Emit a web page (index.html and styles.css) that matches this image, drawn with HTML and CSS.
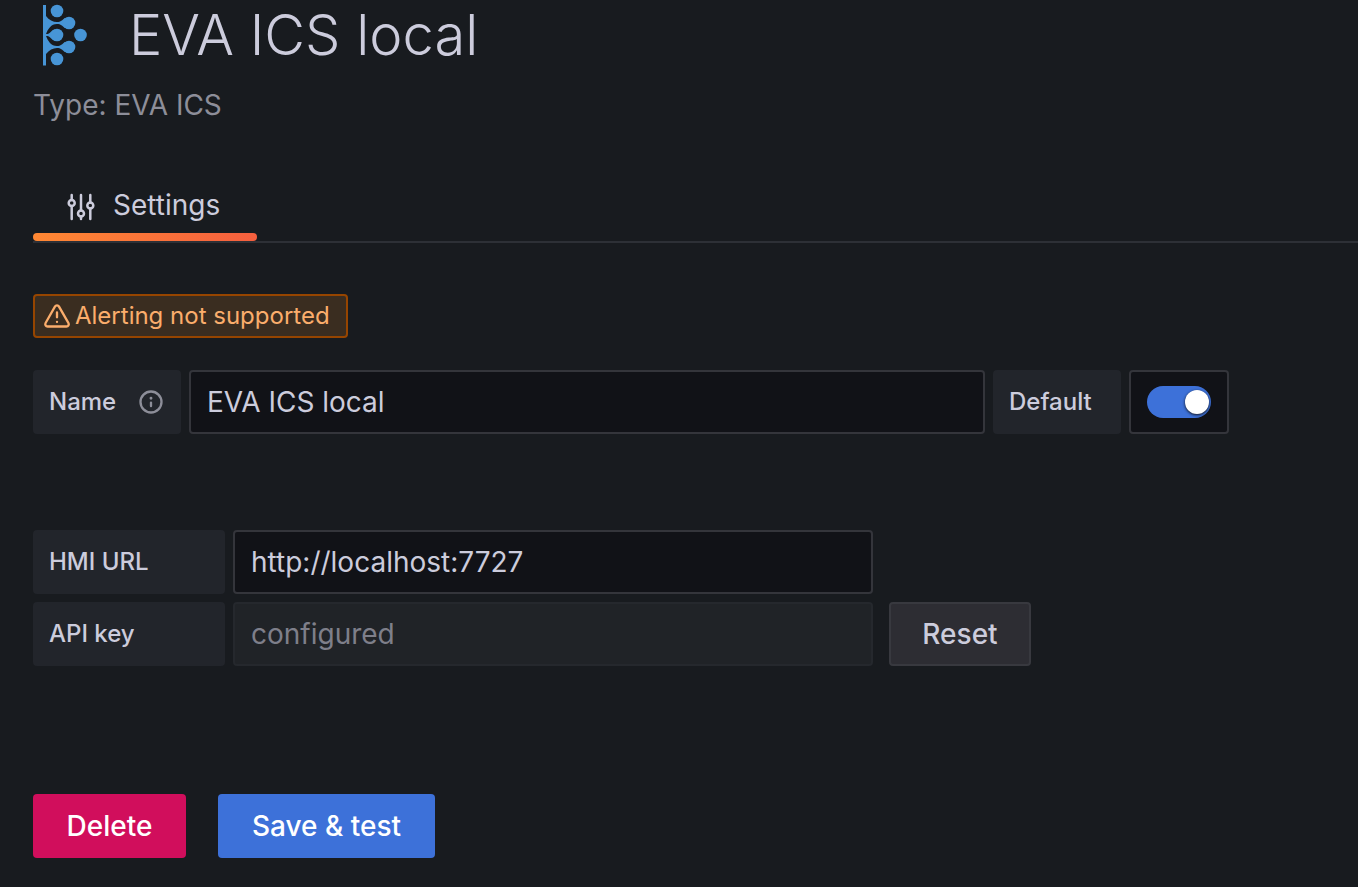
FILE: index.html
```html
<!DOCTYPE html>
<html lang="en">
<head>
<meta charset="utf-8">
<meta name="viewport" content="width=device-width, initial-scale=1">
<title>EVA ICS local</title>
<link rel="stylesheet" href="styles.css">
</head>
<body>
<main class="page">
  <header class="page-header">
    <div class="title-row">
      <svg class="logo" viewBox="0 0 64 64" aria-hidden="true">
        <path d="M10 2h3v11C16 17 20 19 24 19C28 19 29 17 32 15V25C29 23 28 21 24 21C18 21 15 26 13 31H14.500C17 31 18 27 22 26.500V37.500C18 37 17 33 14.500 33H13C15 38 18 43 24 43C28 43 29 41 32 39V49C29 47 28 45 24 45C20 45 16 47 13 51V62.500H10z"/>
        <circle cx="24" cy="8" r="6.300"/><circle cx="36" cy="20" r="6.300"/><circle cx="24" cy="32" r="6.300"/><circle cx="47.500" cy="32" r="6.300"/><circle cx="36" cy="44" r="6.300"/><circle cx="24" cy="56" r="6.300"/>
      </svg>
      <h1 class="title">EVA ICS local</h1>
    </div>
    <p class="subtitle">Type: EVA ICS</p>
  </header>
  <nav class="tabs">
    <a class="tab" href="#settings" aria-current="page">
      <svg class="tab-icon" viewBox="0 0 28 32" aria-hidden="true">
        <path d="M4.700 6V11M4.700 17V30M14 6V21.500M14 27.500V30M23.300 6V13.500M23.300 19.500V30"/>
        <circle cx="4.700" cy="14" r="3"/><circle cx="14" cy="24.500" r="3"/><circle cx="23.300" cy="16.500" r="3"/>
      </svg>
      Settings
    </a>
  </nav>
  <form class="settings" id="settings">
    <div class="badge">
      <svg class="badge-icon" viewBox="0 0 24 24" aria-hidden="true">
        <path d="M12 16a1 1 0 1 0 1 1 1 1 0 0 0-1-1zm10.670 1.470l-8.050-14a3 3 0 0 0-5.240 0l-8 14A3 3 0 0 0 3.940 22h16.120a3 3 0 0 0 2.610-4.530zm-1.730 2a1 1 0 0 1-.88.510H3.940a1 1 0 0 1-.88-.510 1 1 0 0 1 0-1l8-14a1 1 0 0 1 1.780 0l8.050 14a1 1 0 0 1 .050 1.020zM12 8a1 1 0 0 0-1 1v4a1 1 0 0 0 2 0V9a1 1 0 0 0-1-1z"/>
      </svg>
      <span>Alerting not supported</span>
    </div>
    <div class="row row-name">
      <label class="label label-name" for="name">Name
        <svg class="info" viewBox="0 0 24 24" aria-hidden="true"><path d="M12 2a10 10 0 1 0 10 10A10 10 0 0 0 12 2zm0 18a8 8 0 1 1 8-8 8 8 0 0 1-8 8zm0-8.500a1 1 0 0 0-1 1v3a1 1 0 0 0 2 0v-3a1 1 0 0 0-1-1zm0-4a1.250 1.250 0 1 0 1.250 1.250A1.250 1.250 0 0 0 12 7.500z"/></svg>
      </label>
      <input class="input" id="name" type="text" value="EVA ICS local">
      <label class="label label-default" for="default">Default</label>
      <div class="switch-box"><input class="switch" id="default" type="checkbox" role="switch" checked></div>
    </div>
    <div class="connection">
      <div class="row">
        <label class="label label-field" for="url">HMI URL</label>
        <input class="input input-field" id="url" type="text" value="http://localhost:7727">
      </div>
      <div class="row">
        <label class="label label-field" for="key">API key</label>
        <input class="input input-field" id="key" type="text" value="configured" disabled>
        <button class="button button-reset" type="button">Reset</button>
      </div>
    </div>
    <div class="actions">
      <button class="button button-delete" type="button">Delete</button>
      <button class="button button-save" type="submit">Save &amp; test</button>
    </div>
  </form>
</main>
</body>
</html>
```
FILE: styles.css
```css
* { box-sizing: border-box; }

body {
  margin: 0;
  background: #181b1f;
  color: #ccccdc;
  font: 400 28px/44px Inter, "Liberation Sans", sans-serif;
  font-optical-sizing: none;
}

.page { padding: 3px 0 28px 33px; }

.title-row { display: flex; align-items: center; gap: 32px; }
.logo { width: 64px; height: 64px; flex: none; fill: #4795d6; }
.title { margin: 0; font-size: 56px; line-height: 64px; font-weight: 300; }
.subtitle { margin: 16px 0 0; color: #8d8e99; }

.tabs { display: flex; margin-top: 44px; border-bottom: 2px solid #2d3036; }
.tab {
  position: relative;
  display: flex;
  align-items: center;
  gap: 18px;
  min-width: 224px;
  padding: 12px 32px 14px 34px;
  color: inherit;
  text-decoration: none;
}
.tab::after {
  content: "";
  position: absolute;
  left: 0;
  right: 0;
  bottom: 0;
  height: 8px;
  border-radius: 4px;
  background: linear-gradient(90deg, #ff8833, #f55f3e);
}
.tab-icon { width: 28px; height: 32px; fill: none; stroke: currentColor; stroke-width: 2.500; stroke-linecap: round; }

.settings { padding-top: 51px; }

.badge {
  display: flex;
  align-items: center;
  gap: 4px;
  width: fit-content;
  min-width: 315px;
  padding: 4px 8px;
  border: 2px solid #964500;
  border-radius: 4px;
  background: #3a2d20;
  color: #fbad6c;
  font-size: 24px;
  line-height: 32px;
}
.badge-icon { width: 28px; height: 28px; fill: currentColor; }

.row { display: flex; gap: 8px; }
.row-name { max-width: 1196px; margin-top: 32px; }

.label {
  display: flex;
  align-items: center;
  flex: none;
  height: 64px;
  padding: 0 16px;
  border-radius: 4px;
  background: #22252b;
  font-size: 24px;
  font-weight: 500;
}
.label-name { width: 148px; justify-content: space-between; }
.label-default { width: 128px; }
.label-field { width: 192px; }
.info { width: 28px; height: 28px; fill: #8d8e99; }

.input {
  flex: 1;
  min-width: 0;
  height: 64px;
  padding: 0 16px;
  border: 2px solid #34353b;
  border-radius: 4px;
  background: #111217;
  color: inherit;
  font: inherit;
}
.input:disabled { border-color: #25282d; background: #202327; color: #7e7f8a; }
.input-field { flex: 0 1 640px; }

.switch-box {
  display: flex;
  align-items: center;
  flex: none;
  height: 64px;
  padding: 0 16px;
  border: 2px solid #34353b;
  border-radius: 4px;
  background: #111217;
}
.switch {
  display: flex;
  align-items: center;
  justify-content: flex-end;
  width: 64px;
  height: 32px;
  margin: 0;
  padding: 2px;
  border-radius: 16px;
  background: #3d71d9;
  appearance: none;
}
.switch:not(:checked) { justify-content: flex-start; background: #34353b; }
.switch::before {
  content: "";
  width: 24px;
  height: 24px;
  border-radius: 50%;
  background: #fff;
  box-shadow: 0 1px 3px #111217;
}

.connection { display: flex; flex-direction: column; gap: 8px; margin-top: 96px; }

.button {
  height: 64px;
  padding: 0 28px;
  border: 0;
  border-radius: 4px;
  color: #fff;
  font: inherit;
  font-weight: 500;
}
.button-reset { min-width: 142px; margin-left: 8px; border: 2px solid #38393f; background: #2d2d33; color: #ccccdc; }
.button-delete { min-width: 153px; background: #d10e5c; }
.button-save { min-width: 217px; background: #3d71d9; }

.actions { display: flex; flex-wrap: wrap; gap: 32px; margin-top: 128px; }
```
